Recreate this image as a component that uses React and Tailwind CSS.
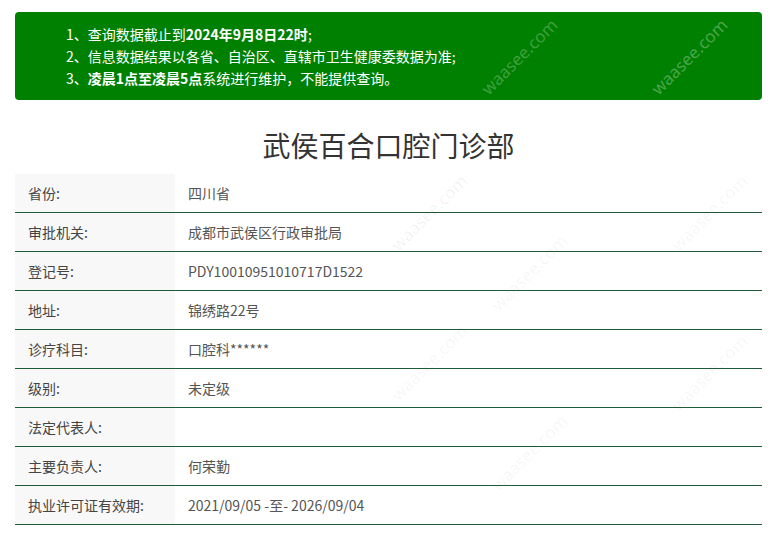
import React from 'react'

const rows = [
  ['省份:', '四川省'],
  ['审批机关:', '成都市武侯区行政审批局'],
  ['登记号:', 'PDY10010951010717D1522'],
  ['地址:', '锦绣路22号'],
  ['诊疗科目:', '口腔科******'],
  ['级别:', '未定级'],
  ['法定代表人:', ''],
  ['主要负责人:', '何荣勤'],
  ['执业许可证有效期:', '2021/09/05 -至- 2026/09/04'],
]

// faint site watermarks laid over the page
const marks = [
  { cls: 'left-[640px] top-[44px] text-white/30' },
  { cls: 'left-[470px] top-[44px] text-white/25' },
  { cls: 'left-[380px] top-[200px] text-black/[0.06]' },
  { cls: 'left-[480px] top-[260px] text-black/[0.05]' },
  { cls: 'left-[660px] top-[200px] text-black/[0.05]' },
  { cls: 'left-[380px] top-[350px] text-black/[0.05]' },
  { cls: 'left-[660px] top-[360px] text-black/[0.05]' },
  { cls: 'left-[480px] top-[440px] text-black/[0.05]' },
]

const App = () => {
  return (
    <div className="relative w-[774px] h-[538px] overflow-hidden bg-white font-['Noto_Sans_CJK_SC','Noto_Sans',sans-serif]">
      <div className="ml-[15px] w-[747px] pt-[12px]">
        <div className="rounded-[4px] bg-[#008000] py-[11px] pl-[51px] text-[14px] leading-[22px] text-white">
          <p>1、查询数据截止到<b>2024年9月8日22时</b>;</p>
          <p>2、信息数据结果以各省、自治区、直辖市卫生健康委数据为准;</p>
          <p>3、<b>凌晨1点至凌晨5点</b>系统进行维护，不能提供查询。</p>
        </div>

        <h1 className="mt-[31px] mb-[15px] text-center text-[28px] leading-[28px] text-[#333]">武侯百合口腔门诊部</h1>

        <div className="text-[14px] text-[#555]">
          {rows.map(([label, value]) => (
            <div key={label} className="flex h-[39px] border-b border-[#1f5a3a]">
              <div className="flex w-[160px] items-center bg-[#f8f8f8] pl-[13px] text-[#444]">{label}</div>
              <div className="flex flex-1 items-center pl-[13px]">{value}</div>
            </div>
          ))}
        </div>
      </div>

      {marks.map((m, i) => (
        <span
          key={i}
          className={`pointer-events-none absolute -rotate-45 font-['Noto_Sans',sans-serif] text-[17px] ${m.cls}`}
        >
          waasee.com
        </span>
      ))}
    </div>
  )
}

export default App
